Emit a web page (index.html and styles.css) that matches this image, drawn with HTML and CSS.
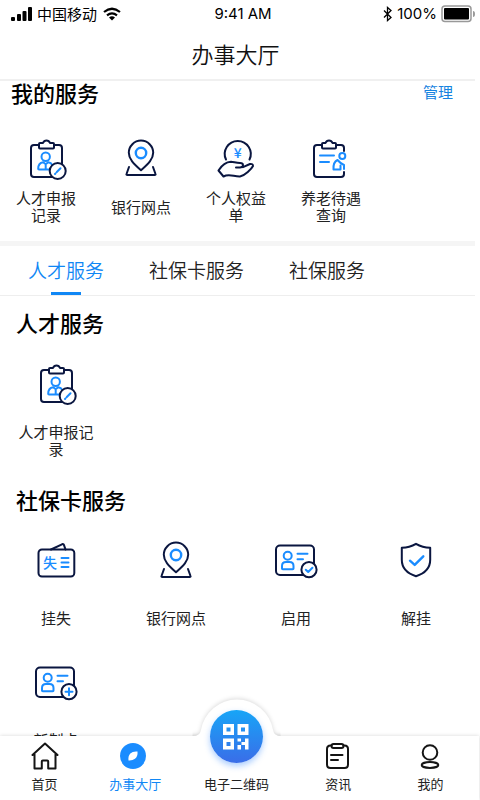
FILE: index.html
```html
<!DOCTYPE html>
<html lang="zh-CN">
<head>
<meta charset="utf-8">
<meta name="viewport" content="width=device-width, initial-scale=1">
<title>办事大厅</title>
<link rel="stylesheet" href="styles.css">
</head>
<body>
<svg class="defs" aria-hidden="true">
  <symbol id="i-record" viewBox="0 0 48 48">
    <path class="ink" d="M17 9h-5a3 3 0 0 0-3 3v26a3 3 0 0 0 3 3h25a3 3 0 0 0 3-3V12a3 3 0 0 0-3-3h-5M17 11.500V8a1 1 0 0 1 1-1h3q1-2.500 3.500-2.500T28 7h3a1 1 0 0 1 1 1v3.500a1 1 0 0 1-1 1H18a1 1 0 0 1-1-1z"/>
    <circle class="sky" cx="23.700" cy="20.700" r="4.200"/>
    <path class="sky" d="M28 33.500H17a.8.8 0 0 1-.8-.8q0-5.700 5-6.500l2.500 2 2.500-2q3 .4 4 2.600M23.700 28v4.500"/>
    <circle class="ink filled" cx="35.700" cy="35" r="8"/>
    <path class="sky" d="M33 38l.6-.6M34.800 36l3.700-3.700"/>
  </symbol>
  <symbol id="i-pin" viewBox="0 0 48 48">
    <path class="ink" d="M24 34.300C16.500 27.500 11.800 23 11.800 16.800a12.200 12.200 0 0 1 24.400 0C36.200 23 31.500 27.500 24 34.300zM12 31l-2.500 7q-.4 1 .8 1h27.400q1.200 0 .8-1L36 31"/>
    <circle class="sky bold" cx="24" cy="17" r="5.200"/>
  </symbol>
  <symbol id="i-card" viewBox="0 0 48 48">
    <rect class="ink" x="4" y="7.500" width="38" height="29.500" rx="4"/>
    <circle class="sky" cx="15.700" cy="17.700" r="4"/>
    <path class="sky" d="M10 30.500v-2.500q0-4 4-4h3.500q4 0 4 4v2.500q0 .8-.8.8h-9.900q-.8 0-.8-.8zM25.500 15.800h10M25.500 21.300h5.500"/>
    <circle class="ink filled" cx="37" cy="31.700" r="7.600"/>
  </symbol>
</svg>

<div class="app">
  <header class="top">
    <div class="status">
      <div class="carrier">
        <svg width="22" height="16" viewBox="0 0 22 16" aria-hidden="true"><rect y="11" width="4" height="4" rx="1"/><rect x="6" y="8" width="4" height="7" rx="1"/><rect x="11.500" y="5" width="4" height="10" rx="1"/><rect x="17" y="1" width="4" height="14" rx="1"/></svg>
        <span>中国移动</span>
        <svg width="18" height="14" viewBox="0 0 18 14" aria-hidden="true"><path class="wave" d="M1 5q8-6.500 16 0M4 8.300q5-4 10 0"/><path d="M6 10.500q3-2.300 6 0L9 13.500z"/></svg>
      </div>
      <span class="time">9:41 AM</span>
      <div class="power">
        <svg width="10" height="16" viewBox="0 0 10 16" aria-hidden="true"><path class="rune" d="M1 4.500l7 7-3.500 3v-13L8 4.500l-7 7"/></svg>
        <span>100%</span>
        <svg width="34" height="18" viewBox="0 0 34 18" aria-hidden="true"><rect class="shell" x="1" y="1" width="29" height="15.500" rx="3"/><rect x="3" y="3" width="25" height="11.500" rx="1"/><path class="cap" d="M32 6q2 0 2 3t-2 3z"/></svg>
      </div>
    </div>
    <h1>办事大厅</h1>
  </header>

  <main>
    <section class="mine">
      <div class="head"><h2>我的服务</h2><button type="button">管理</button></div>
      <div class="grid five">
        <a href="#record"><svg><use href="#i-record"/></svg><span>人才申报记录</span></a>
        <a href="#bank"><svg><use href="#i-pin"/></svg><span>银行网点</span></a>
        <a href="#rights">
          <svg viewBox="0 0 48 48">
            <path class="ink" d="M14 23.500a13 13 0 1 1 23.500 0"/>
            <path class="ink" d="M24 31.500Q31 32 31 29.200 31 27 28 27C24 27 22 26 19 25.800 13.500 26 10 29 6.500 34.500L11.500 40.500C17 37.500 22 40.800 28 40.500 33 39.500 39.500 33 41 30Q41 27.500 38 28L31 31.200"/>
            <text class="glyph" x="25.700" y="22" font-size="14">¥</text>
          </svg>
          <span>个人权益单</span>
        </a>
        <a href="#pension">
          <svg viewBox="0 0 48 48">
            <path class="ink" d="M15 9h-5a3 3 0 0 0-3 3v26a3 3 0 0 0 3 3h24a3 3 0 0 0 3-3v-2M29 9h5a3 3 0 0 1 3 3v3M15 11.500V8a1 1 0 0 1 1-1h2.500q1-2.500 3.500-2.500T25.500 7H28a1 1 0 0 1 1 1v3.500a1 1 0 0 1-1 1H16a1 1 0 0 1-1-1z"/>
            <path class="sky" d="M13 19.500h14M13 26h9M33 33.500h-6.500q-.5-7.500 4-9.500 3 3.500 6.500 5v4M33.500 29.500v4"/>
            <circle class="sky" cx="35.300" cy="20" r="3"/>
          </svg>
          <span>养老待遇查询</span>
        </a>
      </div>
    </section>

    <div class="tabs" role="tablist">
      <button type="button" role="tab" aria-selected="true">人才服务</button>
      <button type="button" role="tab" aria-selected="false">社保卡服务</button>
      <button type="button" role="tab" aria-selected="false">社保服务</button>
    </div>

    <section class="group">
      <h2>人才服务</h2>
      <div class="grid four">
        <a href="#record"><svg><use href="#i-record"/></svg><span>人才申报记录</span></a>
      </div>
    </section>
    <section class="group">
      <h2>社保卡服务</h2>
      <div class="grid four">
        <a href="#loss">
          <svg viewBox="0 0 48 48">
            <rect class="ink" x="6.500" y="11.500" width="35.800" height="27" rx="3.500"/>
            <path class="ink" d="M19 11.500l11-5.200q1.500-.6 2 .8l1.500 4.400"/>
            <text class="glyph" x="18" y="29.500" font-size="14">失</text>
            <path class="sky" d="M29.500 20h7M29.500 24.500h7M29.500 29h7"/>
          </svg>
          <span>挂失</span>
        </a>
        <a href="#bank"><svg><use href="#i-pin"/></svg><span>银行网点</span></a>
        <a href="#enable"><svg viewBox="0 0 48 48"><use href="#i-card"/><path class="sky" d="M33.800 31.700l2.400 2.300 4.200-4.200"/></svg><span>启用</span></a>
        <a href="#release">
          <svg viewBox="0 0 48 48">
            <path class="ink" d="M24 5.800q6.500 3.700 14.200 4v12q0 12-14.200 16.400Q9.800 33.800 9.800 21.800v-12Q17.500 9.500 24 5.800z"/>
            <path class="sky bold" d="M18 22.700l4.700 4.200 8.600-8.600"/>
          </svg>
          <span>解挂</span>
        </a>
        <a href="#new"><svg viewBox="0 0 48 48"><use href="#i-card"/><path class="sky" d="M33.500 31.700h7M37 28.200v7"/></svg><span>新制卡</span></a>
      </div>
    </section>
  </main>

  <nav class="bar">
    <svg class="hump" width="96" height="50" viewBox="0 0 96 50" aria-hidden="true"><path d="M0 50V42H4q7 0 8-6A36.500 36.500 0 0 1 84 36q1 6 8 6h4v8z"/></svg>
    <a href="#home"><svg viewBox="0 0 32 32"><path class="line" d="M3.500 15L16 3.500 28.500 15M5.500 14v14.500h7.300v-7q0-1 1-1h4.400q1 0 1 1v7h7.300V14"/></svg><span>首页</span></a>
    <a href="#hall" class="on" aria-current="page"><svg viewBox="0 0 32 32"><circle class="disc" cx="14" cy="16" r="13"/><path class="leaf" d="M18.500 11.500q.5 5-2.500 7.300-2.500 2-6.500 1.700-.6-4.500 1.800-7 2.500-2.500 7.200-2z"/></svg><span>办事大厅</span></a>
    <a href="#code"><span class="qr"><svg viewBox="0 0 26 26"><path d="M0 0h11v11H0zM3.500 3.500v4h4v-4zM14.500 0h11v11h-11zM18 3.500v4h4v-4zM0 14.500h11v11H0zM3.500 18v4h4v-4zM14.500 14.500h3.500v3h-3.500zM22 14.500h3.500v11H22V21h-3.500v-3H22zM14.500 21H18v4.500h-3.500z" fill-rule="evenodd"/></svg></span><span>电子二维码</span></a>
    <a href="#news"><svg viewBox="0 0 32 32"><path class="line" d="M9.500 5.500H8.500q-3.500 0-3.500 3.500v15.500q0 3.500 3.500 3.500h14q3.500 0 3.500-3.500V9q0-3.500-3.500-3.500h-1M9 15h11.500M9 20h7"/><rect class="line" x="9.500" y="4" width="12" height="4" rx="2"/></svg><span>资讯</span></a>
    <a href="#me"><svg viewBox="0 0 32 32"><circle class="line" cx="16" cy="12.500" r="7.300"/><ellipse class="line" cx="16" cy="25" rx="8.300" ry="2.900"/></svg><span>我的</span></a>
  </nav>
</div>
</body>
</html>
```
FILE: styles.css
```css
* { box-sizing: border-box; }
body {
  margin: 0;
  background: #fff;
  color: #222;
  font-family: "Noto Sans CJK SC", sans-serif;
}
a { color: inherit; text-decoration: none; }
button {
  padding: 0;
  border: 0;
  background: none;
  color: inherit;
  font-family: inherit;
}
h1, h2 { margin: 0; }
h2 { font-size: 22px; line-height: 22px; font-weight: 500; color: #000; }
.defs { position: absolute; width: 0; height: 0; }

.app {
  display: flex;
  flex-direction: column;
  height: 100vh;
}
.top { margin-right: 5px; border-bottom: 2px solid #f0f0f0; }
.status {
  display: grid;
  grid-template-columns: 1fr auto 1fr;
  align-items: center;
  height: 28px;
  padding-left: 11px;
  font-size: 15px;
  line-height: 28px;
  color: #000;
}
.carrier, .power { display: flex; align-items: center; gap: 4px; }
.carrier svg:last-child { margin-left: 2px; }
.power { justify-content: flex-end; }
.time, .power { font-family: Inter, "Noto Sans CJK SC", sans-serif; }
.wave, .rune { fill: none; stroke: #000; stroke-width: 2.200; }
.rune { stroke-width: 1.300; }
.shell { fill: none; stroke: #999; stroke-width: 1.500; }
.cap { fill: #999; }
h1 {
  padding: 0 4px 1px 0;
  font-size: 22px;
  line-height: 50px;
  font-weight: 350;
  text-align: center;
  color: #111;
}

main { flex: 1; min-height: 0; overflow: hidden; margin-right: 5px; }
.head {
  display: flex;
  justify-content: space-between;
  align-items: center;
  padding: 0 22px 0 11px;
  margin-bottom: 33px;
}
.head button { font-size: 15px; line-height: 22px; color: #1683e0; }
.grid { display: grid; padding-right: 3px; font-size: 15px; line-height: 17px; }
.grid a { display: flex; flex-direction: column; align-items: center; }
.grid svg { width: 48px; height: 48px; }
.grid span {
  display: flex;
  align-items: center;
  justify-content: center;
  min-height: 34px;
  text-align: center;
}
.five { grid-template-columns: repeat(5, 1fr); column-gap: 3px; }
.five a { gap: 5px; }
.five span { width: 60px; }
.four { grid-template-columns: repeat(4, 1fr); gap: 26px 8px; }
.four a { gap: 14px; }
.four span { width: 75px; }
.mine { padding-bottom: 18px; border-bottom: 5px solid #f5f5f5; }

.ink, .sky {
  fill: none;
  stroke: #0a1640;
  stroke-width: 2;
  stroke-linecap: round;
  stroke-linejoin: round;
}
.sky { stroke: #1a8cff; }
.bold { stroke-width: 2.400; }
.filled { fill: #fff; }
.glyph { fill: #1a8cff; font-weight: 500; text-anchor: middle; }

.tabs {
  display: flex;
  gap: 45px;
  padding-left: 28px;
  border-bottom: 1px solid #eee;
}
.tabs button {
  position: relative;
  padding-bottom: 2px;
  font-size: 19px;
  line-height: 47px;
  font-weight: 350;
}
.tabs [aria-selected="true"] { color: #1087f5; }
.tabs [aria-selected="true"]::after {
  content: "";
  position: absolute;
  left: 50%;
  bottom: 0;
  width: 30px;
  height: 3px;
  margin-left: -15px;
  background: #1087f5;
}
.group { padding-top: 15px; margin-bottom: 16px; }
.group h2 { padding-left: 16px; margin-bottom: 28px; }

.bar {
  position: relative;
  display: grid;
  grid-template-columns: 89fr 92fr 110fr 93fr 91fr;
  grid-template-rows: 64px;
  padding-right: 3px;
  margin-right: 1px;
  background: #fff;
  box-shadow: 0 0 4px rgba(0, 0, 0, .16);
  font-size: 13px;
  line-height: 18px;
}
.bar a {
  position: relative;
  display: flex;
  flex-direction: column;
  justify-content: flex-end;
  align-items: center;
  gap: 3px;
  padding-bottom: 7px;
}
.bar a > svg { flex: none; width: 32px; height: 32px; }
.bar .on { color: #1087f5; }
.hump {
  position: absolute;
  left: calc(50% - 51px);
  top: -42px;
  overflow: visible;
  fill: #fff;
  filter: drop-shadow(0 -1px 2px rgba(0, 0, 0, .14));
  clip-path: inset(-8px 4px 0 4px);
}
.line {
  fill: none;
  stroke: #151515;
  stroke-width: 2;
  stroke-linejoin: round;
  stroke-linecap: round;
}
.disc { fill: #1a8cff; }
.leaf { fill: #fff; }
.qr {
  display: flex;
  flex: none;
  align-items: center;
  justify-content: center;
  width: 53px;
  height: 53px;
  margin-bottom: 9px;
  border-radius: 50%;
  background: linear-gradient(#17a5f7, #3a6de8);
  box-shadow: 0 3px 6px rgba(40, 130, 255, .4);
}
.qr svg { width: 26px; height: 26px; fill: #fff; }
```
